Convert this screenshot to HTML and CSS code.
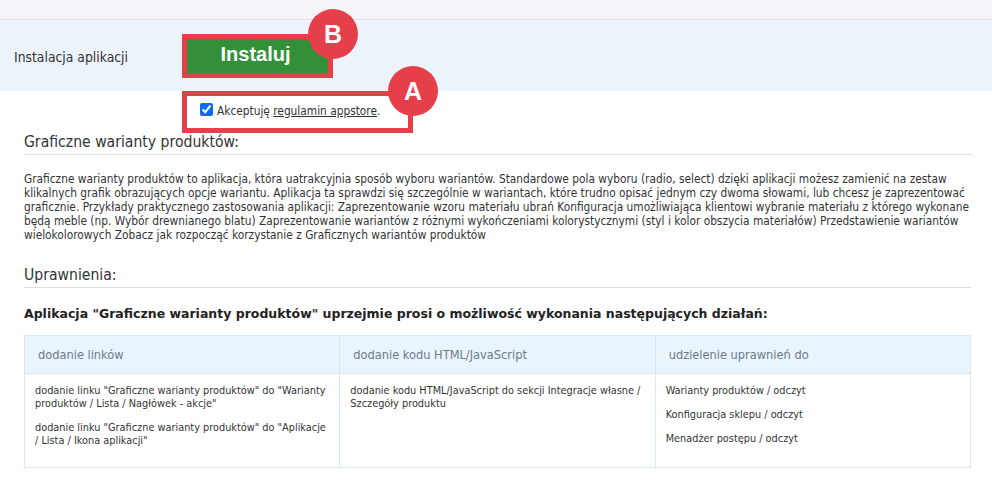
FILE: index.html
```html
<!DOCTYPE html>
<html lang="pl">
<head>
    <meta charset="UTF-8">
    <title>Graficzne warianty produktów</title>
    <link rel="stylesheet" href="styles.css">
</head>
<body>
    <div class="top-bar"></div>

    <!-- Install row -->
    <div class="install-row">
        <div class="install-label">Instalacja aplikacji</div>
        <div class="marked install-mark">
            <button type="button" class="install-button">Instaluj</button>
            <span class="badge badge-b">B</span>
        </div>
    </div>

    <div class="terms-row">
        <div class="marked terms-mark">
            <input type="checkbox" id="terms" checked>
            <label for="terms">Akceptuję <a href="#">regulamin appstore</a>.</label>
            <span class="badge badge-a">A</span>
        </div>
    </div>

    <div class="content">
        <h2>Graficzne warianty produktów:</h2>
        <p class="description">Graficzne warianty produktów to aplikacja, która uatrakcyjnia sposób wyboru wariantów. Standardowe pola wyboru (radio, select) dzięki aplikacji możesz zamienić na zestaw klikalnych grafik obrazujących opcje wariantu. Aplikacja ta sprawdzi się szczególnie w wariantach, które trudno opisać jednym czy dwoma słowami, lub chcesz je zaprezentować graficznie. Przykłady praktycznego zastosowania aplikacji: Zaprezentowanie wzoru materiału ubrań Konfiguracja umożliwiająca klientowi wybranie materiału z którego wykonane będą meble (np. Wybór drewnianego blatu) Zaprezentowanie wariantów z różnymi wykończeniami kolorystycznymi (styl i kolor obszycia materiałów) Przedstawienie wariantów wielokolorowych Zobacz jak rozpocząć korzystanie z Graficznych wariantów produktów</p>

        <h2 class="permissions-title">Uprawnienia:</h2>
        <h3>Aplikacja "Graficzne warianty produktów" uprzejmie prosi o możliwość wykonania następujących działań:</h3>

        <table>
            <thead>
                <tr>
                    <th>dodanie linków</th>
                    <th>dodanie kodu HTML/JavaScript</th>
                    <th>udzielenie uprawnień do</th>
                </tr>
            </thead>
            <tbody>
                <tr>
                    <td>
                        <p>dodanie linku "Graficzne warianty produktów" do "Warianty produktów / Lista / Nagłówek - akcje"</p>
                        <p>dodanie linku "Graficzne warianty produktów" do "Aplikacje / Lista / Ikona aplikacji"</p>
                    </td>
                    <td>
                        <p>dodanie kodu HTML/JavaScript do sekcji Integracje własne / Szczegóły produktu</p>
                    </td>
                    <td>
                        <p>Warianty produktów / odczyt</p>
                        <p>Konfiguracja sklepu / odczyt</p>
                        <p>Menadżer postępu / odczyt</p>
                    </td>
                </tr>
            </tbody>
        </table>
    </div>
</body>
</html>
```

FILE: styles.css
```css
body {
    margin: 0;
    background-color: #fff;
    color: #333;
    font-family: "DejaVu Sans Condensed", "DejaVu Sans", sans-serif;
    font-size: 11.8px;
    line-height: 14px;
}
.top-bar {
    height: 19px;
    background-color: #f3f4f8;
    border-bottom: 1px solid #e1e3e6;
}
.install-row {
    display: flex;
    align-items: flex-start;
    height: 71px;
    background-color: #ecf3fa;
}
.install-label {
    width: 168px;
    margin: 30px 0 0 14px;
    font-size: 13.8px;
}
.marked {
    position: relative;
    box-sizing: border-box;
    border: 5px solid #e5404a;
}
.install-mark {
    width: 151px;
    height: 44px;
    margin-top: 14px;
}
.install-button {
    display: block;
    width: 100%;
    height: 34px;
    padding: 0 4px 4px 0;
    border: none;
    background-color: #339039;
    color: #fff;
    font-family: "Liberation Sans", sans-serif;
    font-size: 20px;
    font-weight: bold;
}
.terms-row {
    display: flex;
    padding-left: 182px;
}
.terms-mark {
    display: flex;
    align-items: center;
    width: 231px;
    height: 42px;
    padding: 0 0 3px 13px;
    background-color: #fff;
    font-size: 11.8px;
}
.terms-mark input {
    width: 13px;
    height: 13px;
    margin: 0 4px 3px 0;
    accent-color: #0a6cf5;
}
.terms-mark a {
    color: #333;
}
.badge {
    position: absolute;
    width: 50px;
    height: 50px;
    border-radius: 50%;
    background-color: #e5404a;
    color: #fff;
    font-family: "Liberation Sans", sans-serif;
    font-size: 25px;
    font-weight: bold;
    line-height: 50px;
    text-align: center;
}
.badge-b {
    top: -30px;
    right: -30px;
}
.badge-a {
    top: -30px;
    right: -30px;
}
.content {
    padding: 0 21px 0 24px;
}
h2 {
    margin: 0;
    padding-bottom: 2px;
    border-bottom: 1px solid #ddd;
    font-size: 15.6px;
    font-weight: normal;
    line-height: 19px;
}
.description {
    margin: 17px 0 0;
}
.permissions-title {
    margin-top: 24px;
}
h3 {
    margin: 17px 0 12px;
    color: #222;
    font-family: "DejaVu Sans", sans-serif;
    font-size: 12.5px;
    line-height: 18px;
}
table {
    width: 100%;
    table-layout: fixed;
    border-collapse: collapse;
    border: 1px solid #d9e6f4;
}
th, td {
    border: 1px solid #d9e6f4;
    vertical-align: top;
    text-align: left;
}
th {
    height: 37px;
    padding: 0 13px;
    background-color: #e9f4fd;
    color: #6c7b8b;
    font-size: 12.7px;
    font-weight: normal;
    vertical-align: middle;
}
td {
    height: 94px;
    padding: 10px 8px 10px 10px;
    box-sizing: border-box;
    font-size: 10.85px;
    line-height: 13px;
}
td p {
    margin: 0 0 11px;
}
td p:last-child {
    margin-bottom: 0;
}
```
